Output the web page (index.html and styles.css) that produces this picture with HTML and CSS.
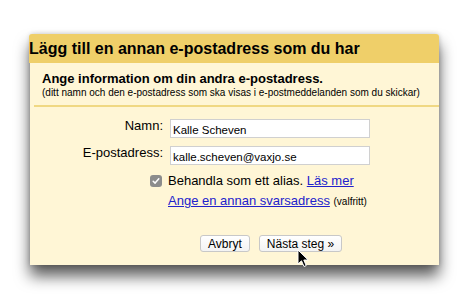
FILE: index.html
```html
<!DOCTYPE html>
<html lang="sv">
<head>
    <meta charset="UTF-8">
    <title>Lägg till e-postadress</title>
    <link rel="stylesheet" href="styles.css">
</head>
<body>
    <div class="dialog">
        <div class="title">Lägg till en annan e-postadress som du har</div>
        <div class="intro">
            <div class="intro-head">Ange information om din andra e-postadress.</div>
            <div class="intro-note">(ditt namn och den e-postadress som ska visas i e-postmeddelanden som du skickar)</div>
        </div>
        <div class="divider"></div>
        <div class="fields">
            <label class="label">Namn:</label>
            <input class="field" type="text" value="Kalle Scheven">
            <label class="label">E-postadress:</label>
            <input class="field" type="text" value="kalle.scheven@vaxjo.se">
        </div>
        <div class="alias">
            <span class="check">
                <svg width="12" height="12" viewBox="0 0 12 12"><path d="M3.2 6.2 L5.1 8.1 L8.8 3.8" fill="none" stroke="#fff" stroke-width="1.5" stroke-linecap="round" stroke-linejoin="round"/></svg>
            </span>
            <span>Behandla som ett alias. <a href="#">Läs mer</a></span>
        </div>
        <div class="reply">
            <a href="#">Ange en annan svarsadress</a> <span class="optional">(valfritt)</span>
        </div>
        <div class="actions">
            <button class="btn">Avbryt</button>
            <button class="btn">Nästa steg »</button>
        </div>
        <svg class="cursor" width="13" height="19" viewBox="0 0 13 19"><path d="M1 1 L1 15 L4.5 11.8 L7 17.5 L9.2 16.6 L6.8 11 L11.2 11 Z" fill="#000" stroke="#fff" stroke-width="1"/></svg>
    </div>
</body>
</html>
```

FILE: styles.css
```css
* {
    margin: 0;
    padding: 0;
    box-sizing: border-box;
}
body {
    min-height: 300px;
    padding-top: 34px;
    background: #fff;
    font-family: "Liberation Sans", Arial, sans-serif;
    color: #000;
}
.dialog {
    position: relative;
    width: 409px;
    height: 231px;
    margin-left: 30px;
    background: #fff6d6;
    border-radius: 3px 3px 0 0;
    box-shadow: 0 11px 15px rgba(0, 0, 0, 0.65), 0 0 5px rgba(0, 0, 0, 0.2);
}
.title {
    height: 29px;
    line-height: 29px;
    background: #efcf69;
    border-radius: 3px 3px 0 0;
    font-size: 16px;
    font-weight: bold;
    margin-left: -1px;
    white-space: nowrap;
}
.intro {
    padding: 8px 0 0 12px;
}
.intro-head {
    font-size: 13px;
    line-height: 15px;
    font-weight: bold;
}
.intro-note {
    font-size: 10px;
    line-height: 11px;
    margin-top: 1px;
}
.divider {
    height: 2px;
    background: #f0d883;
    margin: 7px 0 0 4px;
}
.fields {
    display: grid;
    grid-template-columns: 133px 200px;
    column-gap: 7px;
    row-gap: 8px;
    margin-top: 12px;
}
.label {
    font-size: 13px;
    line-height: 13px;
    text-align: right;
}
.field {
    height: 19px;
    border: 1px solid #d0d0d0;
    background: #fff;
    font-family: "Liberation Sans", Arial, sans-serif;
    font-size: 11.5px;
    padding: 2px 2px 0;
}
.alias {
    display: flex;
    align-items: center;
    gap: 6px;
    margin: 8px 0 0 120px;
    font-size: 13px;
    line-height: 15px;
}
.check {
    display: flex;
    width: 12px;
    height: 12px;
    background: #8c8c8c;
    border-radius: 3px;
}
a {
    color: #2222cc;
}
.reply {
    margin: 5px 0 0 138px;
    font-size: 13px;
    line-height: 15px;
}
.optional {
    font-size: 10px;
}
.actions {
    display: flex;
    gap: 9px;
    margin: 26px 0 0 170px;
}
.btn {
    height: 17px;
    padding: 0 7px;
    border: 1px solid #c8c8c8;
    border-radius: 3px;
    background: linear-gradient(#ffffff, #f3f3f3);
    font-family: "Liberation Sans", Arial, sans-serif;
    font-size: 12px;
    color: #000;
}
.cursor {
    position: absolute;
    left: 267px;
    top: 215px;
}
```
